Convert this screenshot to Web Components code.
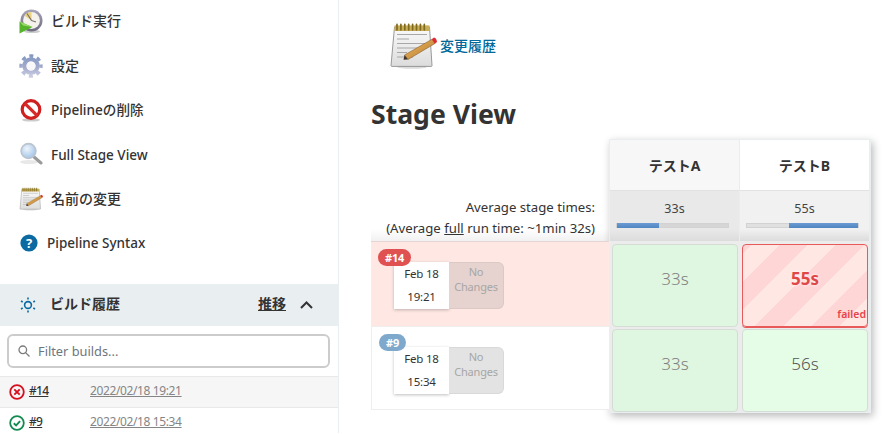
<!DOCTYPE html>
<html lang="ja">
<head>
<meta charset="utf-8">
<title>Stage View</title>
<style>
  html, body { margin: 0; height: 100%; background: #fff; }
  body {
    font-family: "Noto Sans", "Noto Sans CJK JP", sans-serif;
    color: #333;
    overflow: hidden;
  }
</style>
</head>
<body>
<jk-page>
  <jk-sidebar slot="side">
    <jk-task icon="clock" style="font-size:14px">ビルド実行</jk-task>
    <jk-task icon="gear" style="font-size:14px">設定</jk-task>
    <jk-task icon="stop" style="font-size:13.6px">Pipelineの削除</jk-task>
    <jk-task icon="search" nudge>Full Stage View</jk-task>
    <jk-task icon="notepad" style="font-size:14px">名前の変更</jk-task>
    <jk-task icon="help" compact>Pipeline Syntax</jk-task>
    <jk-build-history>
      <jk-build-row status="failed" number="#14" date="2022/02/18 19:21"></jk-build-row>
      <jk-build-row status="ok" number="#9" date="2022/02/18 15:34"></jk-build-row>
    </jk-build-history>
  </jk-sidebar>
  <jk-main slot="main">
    <jk-changes>変更履歴</jk-changes>
    <jk-stage-view>
      <jk-run slot="runs" tone="failed" number="#14" day="Feb 18" time="19:21"></jk-run>
      <jk-run slot="runs" number="#9" day="Feb 18" time="15:34"></jk-run>
      <jk-stage-column slot="stages" name="テストA" avg="33s" from="0" pct="38" shade>
        <jk-stage-cell shade>33s</jk-stage-cell>
        <jk-stage-cell shade>33s</jk-stage-cell>
      </jk-stage-column>
      <jk-stage-column slot="stages" name="テストB" avg="55s" from="38" pct="62">
        <jk-stage-cell failed>55s</jk-stage-cell>
        <jk-stage-cell>56s</jk-stage-cell>
      </jk-stage-column>
    </jk-stage-view>
  </jk-main>
</jk-page>

<script>
const ICONS = {
  clock: `<svg viewBox="0 0 24 26" width="24" height="26">
    <defs><linearGradient id="r" x1="0" y1="0" x2="0" y2="1"><stop offset="0" stop-color="#a9a5bb"/><stop offset="1" stop-color="#6d6a80"/></linearGradient></defs>
    <ellipse cx="13" cy="23.5" rx="8" ry="1.6" fill="#ccc"/>
    <circle cx="12.5" cy="12.5" r="11" fill="url(#r)"/>
    <circle cx="12.5" cy="12.5" r="8.4" fill="#f4f2ea"/>
    <path d="M12.5 12.5 L12.5 4.1 A8.4 8.4 0 0 0 5.5 7.8 Z" fill="#ecd27e"/>
    <path d="M12.5 12.5 L8 5.5 M12.5 12.5 L17 14" stroke="#77736c" stroke-width="1.2"/>
    <path d="M0.5 13.5 L13.5 19 L0.5 25.5 Z" fill="#55b32c"/>
    <path d="M0.5 13.5 L13.5 19 L4 17.5 Z" fill="#9ad968"/>
  </svg>`,
  gear: `<svg viewBox="0 0 24 24" width="24" height="24" fill="none">
    <defs><linearGradient id="g" gradientUnits="userSpaceOnUse" x1="0" y1="0" x2="0" y2="24"><stop offset="0" stop-color="#7f95c0"/><stop offset=".55" stop-color="#a3abcd"/><stop offset="1" stop-color="#cfd1e4"/></linearGradient></defs>
    <circle cx="12" cy="12" r="10" stroke="url(#g)" stroke-width="3.400" stroke-dasharray="4 3.854" stroke-dashoffset="2"/>
    <circle cx="12" cy="12" r="6.600" stroke="url(#g)" stroke-width="4.200"/>
    <circle cx="12" cy="12" r="4.500" fill="#f8f8fb"/>
  </svg>`,
  stop: `<svg viewBox="0 0 24 24" width="24" height="24">
    <ellipse cx="12" cy="22" rx="9" ry="1.6" fill="#ccc"/>
    <circle cx="12" cy="11.5" r="8.800" fill="#fff" stroke="#cf1f1f" stroke-width="3.200"/>
    <path d="M5.800 5.300 L18.200 17.700" stroke="#d92a2a" stroke-width="3.200"/>
  </svg>`,
  search: `<svg viewBox="0 0 24 24" width="24" height="24">
    <defs><radialGradient id="l" cx=".4" cy=".35" r=".7"><stop offset="0" stop-color="#eef5fc"/><stop offset="1" stop-color="#9fc2e6"/></radialGradient></defs>
    <ellipse cx="10" cy="20" rx="9" ry="2" fill="#e8e8e8"/>
    <path d="M14.500 14.500 L22 21" stroke="#9a9a9a" stroke-width="3" stroke-linecap="round"/>
    <circle cx="9.500" cy="9" r="7.400" fill="url(#l)" stroke="#bcc4ce" stroke-width="1.600"/>
  </svg>`,
  notepad: `<svg viewBox="0 0 48 48" width="100%" height="100%">
    <defs>
      <linearGradient id="p" x1="0" y1="0" x2="0" y2="1"><stop offset="0" stop-color="#fafafa"/><stop offset="1" stop-color="#dcdcdc"/></linearGradient>
      <linearGradient id="c" x1="0" y1="0" x2="1" y2="1"><stop offset="0" stop-color="#eab765"/><stop offset="1" stop-color="#b97c2c"/></linearGradient>
    </defs>
    <ellipse cx="23" cy="45" rx="15" ry="1.800" fill="#dcdcdc"/>
    <path d="M5.500 5 H40.500 L43 43.600 Q43 44.400 42 44.400 H3 Q2 44.400 2 43.600 Z" fill="url(#p)" stroke="#8f8f8f" stroke-width=".9"/>
    <rect x="5.500" y="3.400" width="35" height="5.600" fill="#c9ae5a"/>
    <path d="M8 2.400v5.400M11.900 2.400v5.400M15.800 2.400v5.400M19.700 2.400v5.400M23.600 2.400v5.400M27.500 2.400v5.400M31.400 2.400v5.400M35.300 2.400v5.400" stroke="#7f6a1d" stroke-width="1.700" stroke-linecap="round"/>
    <path d="M8 12.500H38M8 17H20M8 21.500H38M8 26H30M8 30.500H18M8 35H24" stroke="#a8a8a8" stroke-width="1"/>
    <path d="M15.500 33 L19 37.500 L46 21.500 L43.400 17 Z" fill="url(#c)" stroke="#7b5320" stroke-width=".5"/>
    <path d="M15.500 33 L19 37.500 L14.500 37.800 Z" fill="#3d3428"/>
    <path d="M42.800 17.300 L45.800 21.700 L48 20 Q47.500 16 45 15.600 Z" fill="#de2b33"/>
  </svg>`,
  help: `<svg viewBox="0 0 18 18" width="18" height="18">
    <circle cx="9" cy="9" r="8.600" fill="#0b6aa2"/>
    <text x="9" y="13.600" text-anchor="middle" font-family="Noto Sans, sans-serif" font-size="13" font-weight="700" fill="#fff">?</text>
  </svg>`
};

class JkPage extends HTMLElement {
  constructor() {
    super();
    this.attachShadow({ mode: 'open' });
    this.shadowRoot.innerHTML = `
      <style>
        :host { display: flex; width: 893px; height: 434px; overflow: hidden; }
        .side { display: block; flex: 0 0 339px; }
        .main { display: block; flex: 1; min-width: 0; }
      </style>
      <div class="side"><slot name="side"></slot></div>
      <div class="main"><slot name="main"></slot></div>
    `;
  }
}
customElements.define('jk-page', JkPage);

class JkSidebar extends HTMLElement {
  constructor() {
    super();
    this.attachShadow({ mode: 'open' });
    this.shadowRoot.innerHTML = `
      <style>
        :host {
          display: block;
          box-sizing: border-box;
          height: 434px;
          border-right: 1px solid #e9eef1;
        }
        .inner { display: flex; flex-direction: column; margin-top: -1px; }
      </style>
      <div class="inner"><slot></slot></div>
    `;
  }
}
customElements.define('jk-sidebar', JkSidebar);

class JkTask extends HTMLElement {
  constructor() {
    super();
    this.attachShadow({ mode: 'open' });
    const compact = this.hasAttribute('compact');
    this.shadowRoot.innerHTML = `
      <style>
        :host {
          display: flex;
          align-items: center;
          height: 44.4px;
          padding-left: 19px;
          font-size: 13.5px;
          line-height: 20px;
          font-weight: 500;
          color: #333;
        }
        :host([nudge]) .label { margin-top: 2px; }
        .icon { display: flex; align-items: center; justify-content: center; width: ${compact ? 20 : 24}px; height: 24px; margin-right: 8px; }
      </style>
      <span class="icon">${ICONS[this.getAttribute('icon')]}</span>
      <span class="label"><slot></slot></span>
    `;
  }
}
customElements.define('jk-task', JkTask);

class JkBuildHistory extends HTMLElement {
  constructor() {
    super();
    this.attachShadow({ mode: 'open' });
    this.shadowRoot.innerHTML = `
      <style>
        :host { display: block; margin-top: 19px; }
        .head {
          display: flex;
          align-items: center;
          height: 42px;
          padding: 0 25px 0 20px;
          background: #e9eef1;
          font-size: 14px;
          line-height: 20px;
          font-weight: 700;
          color: #333;
        }
        .head svg.sun { width: 16px; height: 16px; margin-right: 14px; }
        .title { flex: 1; margin-bottom: 2px; }
        .trend { text-decoration: underline; margin: 0 14px 2px 0; }
        .filter { padding: 8px 8px 8px 7px; }
        .box {
          display: flex;
          align-items: center;
          box-sizing: border-box;
          height: 34px;
          padding-left: 9px;
          border: 2px solid #ccc;
          border-radius: 6px;
          font-size: 12.8px;
          color: #6d7680;
        }
        .box svg { width: 12px; height: 12px; margin-right: 8px; }
      </style>
      <div class="head">
        <svg class="sun" viewBox="0 0 16 16" fill="none" stroke="#0b6aa2">
          <circle cx="8" cy="8" r="3.400" stroke-width="1.600"/>
          <path d="M8 .5v2M8 13.500v2M1 4l1.700 1M13.300 11l1.700 1M1 12l1.700-1M13.300 5L15 4" stroke-width="1.600"/>
        </svg>
        <span class="title">ビルド履歴</span>
        <span class="trend">推移</span>
        <svg width="13" height="8" viewBox="0 0 13 8" fill="none" stroke="#333" stroke-width="2"><path d="M1 7l5.500-5.500L12 7"/></svg>
      </div>
      <div class="filter">
        <div class="box">
          <svg viewBox="0 0 12 12" fill="none" stroke="#7b7b7b" stroke-width="1.300"><circle cx="4.800" cy="4.800" r="3.800"/><path d="M7.600 7.600L11.500 11.500"/></svg>
          <span>Filter builds...</span>
        </div>
      </div>
      <slot></slot>
    `;
  }
}
customElements.define('jk-build-history', JkBuildHistory);

class JkBuildRow extends HTMLElement {
  constructor() {
    super();
    this.attachShadow({ mode: 'open' });
    const failed = this.getAttribute('status') === 'failed';
    const mark = failed
      ? `<circle cx="8" cy="8" r="6.800" fill="none" stroke="#d70e1e" stroke-width="1.800"/><path d="M5.300 5.300l5.400 5.400M10.700 5.300l-5.400 5.400" stroke="#d70e1e" stroke-width="1.900"/>`
      : `<circle cx="8" cy="8" r="6.800" fill="none" stroke="#138a52" stroke-width="1.800"/><path d="M4.800 8.300l2.300 2.200 4-4.300" fill="none" stroke="#138a52" stroke-width="1.900"/>`;
    this.shadowRoot.innerHTML = `
      <style>
        :host {
          display: flex;
          align-items: center;
          box-sizing: border-box;
          height: 31px;
          padding-left: 9px;
          padding-bottom: 2px;
          border-top: 1px solid #e9e9e9;
          font-size: 12px;
          line-height: 16px;
          background: ${failed ? '#f6f6f6' : '#fff'};
        }
        svg { width: 16px; height: 16px; margin-right: 4px; position: relative; top: 1px; }
        .num { width: 61px; color: #333; text-decoration: underline; font-weight: 500; letter-spacing: -.7px; }
        .date { color: #858585; text-decoration: underline; letter-spacing: -.38px; }
      </style>
      <svg viewBox="0 0 16 16">${mark}</svg>
      <span class="num">${this.getAttribute('number')}</span>
      <span class="date">${this.getAttribute('date')}</span>
    `;
  }
}
customElements.define('jk-build-row', JkBuildRow);

class JkMain extends HTMLElement {
  constructor() {
    super();
    this.attachShadow({ mode: 'open' });
    this.shadowRoot.innerHTML = `
      <style>
        :host { display: block; padding: 22px 0 0 32px; }
      </style>
      <slot></slot>
    `;
  }
}
customElements.define('jk-main', JkMain);

class JkChanges extends HTMLElement {
  constructor() {
    super();
    this.attachShadow({ mode: 'open' });
    this.shadowRoot.innerHTML = `
      <style>
        :host {
          display: flex;
          align-items: center;
          height: 48px;
          padding-left: 18px;
          font-size: 14px;
          line-height: 20px;
          font-weight: 500;
          color: #00689b;
        }
        .icon { width: 48px; height: 48px; margin-right: 3px; }
      </style>
      <span class="icon">${ICONS.notepad}</span>
      <a><slot></slot></a>
    `;
  }
}
customElements.define('jk-changes', JkChanges);

class JkStageView extends HTMLElement {
  constructor() {
    super();
    this.attachShadow({ mode: 'open' });
    this.shadowRoot.innerHTML = `
      <style>
        :host { display: block; width: 522px; }
        h2 {
          margin: 26px 0 7px;
          font-size: 26.6px;
          line-height: 36px;
          font-weight: 700;
          color: #333;
        }
        .grid { display: flex; align-items: flex-start; }
        .left { flex: 0 0 238px; }
        .labels {
          box-sizing: border-box;
          height: 102px;
          padding: 58px 14px 0 0;
          text-align: right;
          font-size: 13.2px;
          line-height: 21px;
          color: #333;
          background: linear-gradient(#fff 90px, #f1f1f1);
        }
        .stages {
          display: flex;
          box-sizing: border-box;
          width: 262px;
          height: 274px;
          border: 1px solid #e9eef1;
          background: #ececec;
          box-shadow: 2px 3px 8px rgba(0, 0, 0, .28);
        }
      </style>
      <h2>Stage View</h2>
      <div class="grid">
        <div class="left">
          <div class="labels">Average stage times:<br>(Average <u>full</u> run time: ~1min 32s)</div>
          <slot name="runs"></slot>
        </div>
        <div class="stages"><slot name="stages"></slot></div>
      </div>
    `;
  }
}
customElements.define('jk-stage-view', JkStageView);

class JkRun extends HTMLElement {
  constructor() {
    super();
    this.attachShadow({ mode: 'open' });
    const failed = this.getAttribute('tone') === 'failed';
    this.shadowRoot.innerHTML = `
      <style>
        :host {
          display: block;
          box-sizing: border-box;
          height: ${failed ? 85 : 84}px;
          padding: ${failed ? '20px 0 0 23px' : '20px 0 0 22px'};
          background: ${failed ? '#ffe8e3' : '#fff'};
          border: 1px solid #eee;
          border-width: ${failed ? '1px 0 0' : '1px 0 1px 1px'};
          border-top-color: ${failed ? '#e6d6d3' : '#eee'};
          position: relative;
        }
        .badge {
          position: absolute;
          left: 7px;
          top: 7px;
          padding: 0 7px;
          height: 17px;
          line-height: 17px;
          border-radius: 9px;
          font-size: 11px;
          font-weight: 700;
          letter-spacing: -.2px;
          color: #fff;
          background: ${failed ? '#e05252' : '#7fa9cc'};
        }
        .wrap { display: flex; height: 47px; font-size: 11.5px; }
        .date {
          box-sizing: border-box;
          width: 55px;
          text-align: center;
          line-height: 23px;
          letter-spacing: -.2px;
          color: #333;
          background: #fff;
          box-shadow: 0 1px 3px rgba(0, 0, 0, .25);
        }
        .none {
          box-sizing: border-box;
          width: 55px;
          padding-top: 1px;
          text-align: center;
          line-height: 15px;
          font-size: 11px;
          letter-spacing: -.2px;
          color: #a6a6a6;
          background: ${failed ? '#e6d3cf' : '#e3e3e3'};
          border: 1px solid ${failed ? '#dcc9c5' : '#d9d9d9'};
          border-left: 0;
          border-radius: 0 6px 6px 0;
        }
      </style>
      <span class="badge">${this.getAttribute('number')}</span>
      <div class="wrap">
        <div class="date">${this.getAttribute('day')}<br>${this.getAttribute('time')}</div>
        <div class="none">No<br>Changes</div>
      </div>
    `;
  }
}
customElements.define('jk-run', JkRun);

class JkStageColumn extends HTMLElement {
  constructor() {
    super();
    this.attachShadow({ mode: 'open' });
    const shade = this.hasAttribute('shade');
    this.shadowRoot.innerHTML = `
      <style>
        :host { display: block; flex: 1; min-width: 0; }
        .name {
          height: 50px;
          display: flex;
          align-items: center;
          justify-content: center;
          font-size: 14px;
          font-weight: 700;
          color: #333;
          background: ${shade ? '#f7f7f7' : '#fff'};
          border-right: 1px solid #ececec;
        }
        .avg {
          box-sizing: border-box;
          height: 51px;
          margin-right: 1px;
          padding-top: 9px;
          text-align: center;
          font-size: 12.5px;
          line-height: 17px;
          color: #444;
          background: linear-gradient(${shade ? '#e9e9e9' : '#f1f1f1'} 38px, #dcdcdc);
          border-top: 1px solid #e2e2e2;
        }
        .bar {
          height: 5px;
          margin: 6px 10px 0 6px;
          background: ${shade ? '#d6d6d6' : '#e0e0e0'};
          border: 1px solid #d2d2d2;
          box-sizing: border-box;
          position: relative;
        }
        .fill {
          position: absolute;
          top: -1px;
          bottom: -1px;
          left: ${this.getAttribute('from')}%;
          width: ${this.getAttribute('pct')}%;
          background: linear-gradient(#6d9ad2, #4f86c2);
        }
        .cells { padding: 3px 2px 0 2px; display: flex; flex-direction: column; gap: 2px; }
      </style>
      <div class="name">${this.getAttribute('name')}</div>
      <div class="avg">${this.getAttribute('avg')}<div class="bar"><div class="fill"></div></div></div>
      <div class="cells"><slot></slot></div>
    `;
  }
}
customElements.define('jk-stage-column', JkStageColumn);

class JkStageCell extends HTMLElement {
  constructor() {
    super();
    this.attachShadow({ mode: 'open' });
    const failed = this.hasAttribute('failed');
    this.shadowRoot.innerHTML = `
      <style>
        :host {
          display: block;
          position: relative;
          box-sizing: border-box;
          height: 83px;
          padding-top: 22px;
          text-align: center;
          font-size: 17px;
          font-weight: 300;
          line-height: 24px;
          color: #555;
          border: 1px solid #d5dcd5;
          border-radius: 4px;
          background: #e5fde6;
        }
        :host([shade]) { background: #dff6e0; color: #808080; }
        :host([failed]) {
          color: #e04848;
          font-weight: 700;
          border-color: #e85a5a;
          box-shadow: 0 1px 0 #e85a5a;
          background: repeating-linear-gradient(135deg, #ffd6d6 -14.3px 5.7px, #ffe7e3 5.7px 25.7px);
          text-shadow: 0 0 3px #fff;
        }
        .tag {
          position: absolute;
          right: 1px;
          bottom: 5px;
          font-size: 10.5px;
          line-height: 14px;
          font-weight: 600;
          color: #e8434a;
          text-shadow: none;
        }
      </style>
      <slot></slot>
      ${failed ? '<span class="tag">failed</span>' : ''}
    `;
  }
}
customElements.define('jk-stage-cell', JkStageCell);
</script>
</body>
</html>
